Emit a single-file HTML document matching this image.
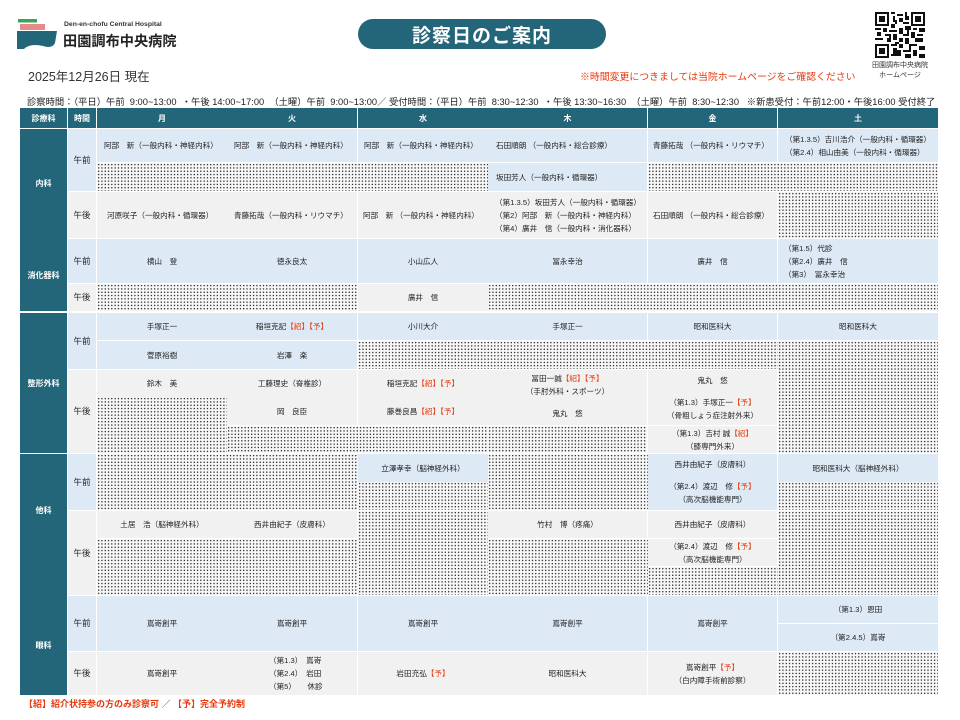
<!DOCTYPE html>
<html><head><meta charset="utf-8"><style>
*{margin:0;padding:0;box-sizing:border-box}
body{width:960px;height:720px;background:#fff;position:relative;overflow:hidden;font-family:"Liberation Sans","Noto Sans CJK JP",sans-serif;color:#222}
.c{position:absolute;display:flex;flex-direction:column;justify-content:center;align-items:center;text-align:center;font-size:7.6px;line-height:13px;white-space:nowrap}
.l{align-items:flex-start;text-align:left;padding-left:7px}
.b{background:#dde9f5}
.g{background:#f1f1f1}
.d{background-color:#f7f7f7;background-image:radial-gradient(circle,#111 0.55px,transparent 0.75px);background-size:3.3px 3.3px}
.t{background:#246679;color:#fff;font-weight:bold;font-size:8px}
.r{color:#e8380d}
.tm{font-size:8.5px}
</style></head><body>
<!-- logo -->
<svg style="position:absolute;left:16px;top:19px" width="42" height="31" viewBox="0 0 42 31">
<rect x="2" y="0" width="19" height="3.5" fill="#3aa55a"/>
<rect x="4" y="5" width="25" height="6" fill="#e48a8c"/>
<path d="M1 12 H41 L39 24 Q36 30 27 27 Q14 24 8 30 H1 Z" fill="#246679"/>
</svg>
<div style="position:absolute;left:64px;top:21px;font-size:6.8px;font-weight:bold;color:#333">Den-en-chofu Central Hospital</div>
<div style="position:absolute;left:63px;top:31px;font-size:14.2px;font-weight:bold;color:#222">田園調布中央病院</div>
<div style="position:absolute;left:358px;top:19px;width:248px;height:30px;border-radius:15px;background:#246679;color:#fff;font-size:19px;font-weight:bold;display:flex;align-items:center;justify-content:center;letter-spacing:1px">診察日のご案内</div>
<!-- QR -->
<svg style="position:absolute;left:875px;top:12px" width="50" height="46" viewBox="0 0 25 23" shape-rendering="crispEdges">
<g fill="#111">
<rect x="0" y="0" width="7" height="7"/><rect x="18" y="0" width="7" height="7"/><rect x="0" y="16" width="7" height="7"/>
</g>
<g fill="#fff"><rect x="1" y="1" width="5" height="5"/><rect x="19" y="1" width="5" height="5"/><rect x="1" y="17" width="5" height="5"/></g>
<g fill="#111"><rect x="2" y="2" width="3" height="3"/><rect x="20" y="2" width="3" height="3"/><rect x="2" y="18" width="3" height="3"/>
<rect x="8" y="0" width="2" height="1"/><rect x="11" y="1" width="3" height="1"/><rect x="9" y="2" width="1" height="3"/><rect x="12" y="3" width="2" height="2"/><rect x="15" y="0" width="1" height="4"/><rect x="14" y="5" width="3" height="1"/><rect x="8" y="6" width="2" height="2"/><rect x="10" y="4" width="1" height="2"/><rect x="16" y="2" width="1" height="2"/>
<rect x="0" y="8" width="3" height="1"/><rect x="4" y="8" width="2" height="2"/><rect x="7" y="9" width="4" height="1"/><rect x="12" y="8" width="2" height="3"/><rect x="15" y="7" width="3" height="2"/><rect x="19" y="8" width="2" height="1"/><rect x="22" y="8" width="3" height="2"/>
<rect x="1" y="10" width="2" height="2"/><rect x="5" y="11" width="3" height="1"/><rect x="9" y="11" width="2" height="3"/><rect x="14" y="11" width="3" height="1"/><rect x="18" y="10" width="2" height="3"/><rect x="21" y="11" width="3" height="1"/><rect x="7" y="12" width="1" height="1"/><rect x="16" y="9" width="1" height="2"/>
<rect x="0" y="13" width="4" height="1"/><rect x="6" y="13" width="2" height="2"/><rect x="12" y="13" width="2" height="2"/><rect x="15" y="13" width="2" height="3"/><rect x="20" y="13" width="4" height="2"/><rect x="10" y="15" width="2" height="1"/>
<rect x="8" y="16" width="3" height="1"/><rect x="12" y="16" width="2" height="2"/><rect x="17" y="16" width="4" height="1"/><rect x="22" y="17" width="3" height="2"/><rect x="9" y="18" width="2" height="3"/><rect x="14" y="19" width="4" height="1"/><rect x="19" y="19" width="2" height="3"/><rect x="8" y="21" width="5" height="1"/><rect x="15" y="21" width="3" height="2"/><rect x="22" y="21" width="3" height="2"/><rect x="11" y="19" width="2" height="2"/><rect x="17" y="17" width="1" height="2"/>
</g></svg>
<div style="position:absolute;left:862px;top:61px;width:76px;text-align:center;font-size:7px;line-height:10px;color:#333">田園調布中央病院<br>ホームページ</div>
<div style="position:absolute;left:28px;top:66px;font-size:12.5px;color:#333">2025年12月26日 現在</div>
<div style="position:absolute;left:580px;top:69px;font-size:9.9px;color:#e8380d">※時間変更につきましては当院ホームページをご確認ください</div>
<div style="position:absolute;left:27px;top:94px;font-size:9.3px;color:#222;white-space:nowrap">診察時間：（平日）午前&nbsp; 9:00~13:00&nbsp; ・午後&nbsp;14:00~17:00&nbsp; （土曜）午前&nbsp; 9:00~13:00／ 受付時間：（平日）午前&nbsp; 8:30~12:30&nbsp; ・午後&nbsp;13:30~16:30&nbsp; （土曜）午前&nbsp; 8:30~12:30&nbsp;&nbsp; ※新患受付：午前12:00・午後16:00 受付終了</div>

<!-- header -->
<div class="c t" style="left:20px;top:108px;width:47px;height:20px">診療科</div>
<div class="c t" style="left:68px;top:108px;width:28px;height:20px">時間</div>
<div class="c t" style="left:97px;top:108px;width:130px;height:20px">月</div>
<div class="c t" style="left:227px;top:108px;width:130px;height:20px">火</div>
<div class="c t" style="left:358px;top:108px;width:130px;height:20px">水</div>
<div class="c t" style="left:488px;top:108px;width:159px;height:20px">木</div>
<div class="c t" style="left:648px;top:108px;width:129px;height:20px">金</div>
<div class="c t" style="left:778px;top:108px;width:160px;height:20px">土</div>

<!-- dept -->
<div class="c t" style="left:20px;top:129px;width:47px;height:182px;justify-content:flex-start"><span style="margin-top:48px">内科</span><span style="margin-top:79px">消化器科</span></div>
<div class="c t" style="left:20px;top:313px;width:47px;height:140px">整形外科</div>
<div class="c t" style="left:20px;top:454px;width:47px;height:241px;justify-content:flex-start"><span style="margin-top:50px">他科</span><span style="margin-top:122px">眼科</span></div>

<!-- time -->
<div class="c b tm" style="left:68px;top:129px;width:28px;height:62px">午前</div>
<div class="c g tm" style="left:68px;top:192px;width:28px;height:46px">午後</div>
<div class="c b tm" style="left:68px;top:239px;width:28px;height:44px">午前</div>
<div class="c g tm" style="left:68px;top:284px;width:28px;height:27px">午後</div>
<div class="c b tm" style="left:68px;top:313px;width:28px;height:56px">午前</div>
<div class="c g tm" style="left:68px;top:370px;width:28px;height:83px">午後</div>
<div class="c b tm" style="left:68px;top:454px;width:28px;height:56px">午前</div>
<div class="c g tm" style="left:68px;top:511px;width:28px;height:84px">午後</div>
<div class="c b tm" style="left:68px;top:596px;width:28px;height:55px">午前</div>
<div class="c g tm" style="left:68px;top:652px;width:28px;height:43px">午後</div>

<!-- 内科 午前 -->
<div class="c b l" style="left:97px;top:129px;width:130px;height:33px">阿部　新（一般内科・神経内科）</div>
<div class="c b l" style="left:227px;top:129px;width:130px;height:33px">阿部　新（一般内科・神経内科）</div>
<div class="c b l" style="left:358px;top:129px;width:130px;height:33px;padding-left:6px">阿部　新（一般内科・神経内科）</div>
<div class="c b l" style="left:488px;top:129px;width:159px;height:33px;padding-left:8px">石田順朗 （一般内科・総合診療）</div>
<div class="c b l" style="left:648px;top:129px;width:129px;height:33px;padding-left:5px">青藤拓哉 （一般内科・リウマチ）</div>
<div class="c b l" style="left:778px;top:129px;width:160px;height:33px;padding-left:7px">（第1.3.5）吉川浩介（一般内科・循環器）<br>（第2.4）相山由美（一般内科・循環器）</div>
<div class="c d" style="left:97px;top:163px;width:391px;height:28px"></div>
<div class="c b l" style="left:488px;top:163px;width:159px;height:28px;padding-left:8px">坂田芳人（一般内科・循環器）</div>
<div class="c d" style="left:648px;top:163px;width:290px;height:28px"></div>
<!-- 内科 午後 -->
<div class="c g l" style="left:97px;top:192px;width:130px;height:46px;padding-left:10px">河原咲子（一般内科・循環器）</div>
<div class="c g l" style="left:227px;top:192px;width:130px;height:46px">青藤拓哉（一般内科・リウマチ）</div>
<div class="c g l" style="left:358px;top:192px;width:130px;height:46px;padding-left:5px">阿部　新 （一般内科・神経内科）</div>
<div class="c g l" style="left:488px;top:192px;width:159px;height:46px;padding-left:7px">（第1.3.5）坂田芳人（一般内科・循環器）<br>（第2）阿部　新（一般内科・神経内科）<br>（第4）廣井　信（一般内科・消化器科）</div>
<div class="c g l" style="left:648px;top:192px;width:129px;height:46px;padding-left:5px">石田順朗 （一般内科・総合診療）</div>
<div class="c d" style="left:778px;top:192px;width:160px;height:46px"></div>
<!-- 消化器 -->
<div class="c b" style="left:97px;top:239px;width:130px;height:44px">横山　登</div>
<div class="c b" style="left:227px;top:239px;width:130px;height:44px">徳永良太</div>
<div class="c b" style="left:358px;top:239px;width:130px;height:44px">小山広人</div>
<div class="c b" style="left:488px;top:239px;width:159px;height:44px">冨永幸治</div>
<div class="c b" style="left:648px;top:239px;width:129px;height:44px">廣井　信</div>
<div class="c b l" style="left:778px;top:239px;width:160px;height:44px;padding-left:6px">（第1.5）代診<br>（第2.4）廣井　信<br>（第3）　冨永幸治</div>
<div class="c d" style="left:97px;top:284px;width:260px;height:27px"></div>
<div class="c g" style="left:358px;top:284px;width:130px;height:27px">廣井　信</div>
<div class="c d" style="left:488px;top:284px;width:450px;height:27px"></div>

<!-- 整形外科 -->
<div class="c b" style="left:97px;top:313px;width:130px;height:27px">手塚正一</div>
<div class="c b" style="left:227px;top:313px;width:130px;height:27px"><span>稲垣克記<span class="r">【紹】【予】</span></span></div>
<div class="c b" style="left:358px;top:313px;width:130px;height:27px">小川大介</div>
<div class="c b" style="left:488px;top:313px;width:159px;height:27px">手塚正一</div>
<div class="c b" style="left:648px;top:313px;width:129px;height:27px">昭和医科大</div>
<div class="c b" style="left:778px;top:313px;width:160px;height:27px">昭和医科大</div>
<div class="c b" style="left:97px;top:341px;width:130px;height:28px">菅原裕樹</div>
<div class="c b" style="left:227px;top:341px;width:130px;height:28px">岩澤　楽</div>
<div class="c d" style="left:358px;top:341px;width:580px;height:28px"></div>
<div class="c g" style="left:97px;top:370px;width:130px;height:27px">鈴木　美</div>
<div class="c d" style="left:97px;top:397px;width:130px;height:56px"></div>
<div class="c g" style="left:227px;top:370px;width:130px;height:27px">工藤理史（脊椎診）</div>
<div class="c g" style="left:227px;top:397px;width:130px;height:28px">岡　良臣</div>
<div class="c d" style="left:227px;top:426px;width:261px;height:27px"></div>
<div class="c g" style="left:358px;top:370px;width:130px;height:27px"><span>稲垣克記<span class="r">【紹】【予】</span></span></div>
<div class="c g" style="left:358px;top:397px;width:130px;height:28px"><span>藤巻良昌<span class="r">【紹】【予】</span></span></div>
<div class="c g" style="left:488px;top:370px;width:159px;height:55px;justify-content:flex-start;padding-top:2px"><span>冨田一誠<span class="r">【紹】【予】</span></span><span>（手肘外科・スポーツ）</span><span style="margin-top:9px">鬼丸　悠</span></div>
<div class="c d" style="left:488px;top:426px;width:159px;height:27px"></div>
<div class="c g" style="left:648px;top:370px;width:129px;height:55px"><span>鬼丸　悠</span><span style="margin-top:9px">（第1.3）手塚正一<span class="r">【予】</span></span><span>（骨粗しょう症注射外来）</span></div>
<div class="c g" style="left:648px;top:426px;width:129px;height:27px"><span>（第1.3）吉村 誠<span class="r">【紹】</span></span><span>（膝専門外来）</span></div>
<div class="c d" style="left:778px;top:341px;width:160px;height:112px"></div>

<!-- 他科 -->
<div class="c d" style="left:97px;top:454px;width:261px;height:56px"></div>
<div class="c b" style="left:358px;top:454px;width:130px;height:28px">立澤孝幸（脳神経外科）</div>
<div class="c d" style="left:358px;top:482px;width:130px;height:28px"></div>
<div class="c d" style="left:488px;top:454px;width:160px;height:56px"></div>
<div class="c b" style="left:648px;top:454px;width:129px;height:56px"><span>西井由紀子（皮膚科）</span><span style="margin-top:9px">（第2.4）渡辺　修<span class="r">【予】</span></span><span>（高次脳機能専門）</span></div>
<div class="c b" style="left:778px;top:454px;width:160px;height:28px">昭和医科大（脳神経外科）</div>
<div class="c d" style="left:778px;top:482px;width:160px;height:28px"></div>
<div class="c g" style="left:97px;top:511px;width:130px;height:27px">土居　浩（脳神経外科）</div>
<div class="c g" style="left:227px;top:511px;width:130px;height:27px">西井由紀子（皮膚科）</div>
<div class="c d" style="left:97px;top:539px;width:261px;height:56px"></div>
<div class="c d" style="left:358px;top:511px;width:130px;height:84px"></div>
<div class="c g" style="left:488px;top:511px;width:159px;height:27px">竹村　博（疼痛）</div>
<div class="c d" style="left:488px;top:539px;width:160px;height:56px"></div>
<div class="c g" style="left:648px;top:511px;width:129px;height:27px">西井由紀子（皮膚科）</div>
<div class="c g" style="left:648px;top:539px;width:129px;height:27px"><span>（第2.4）渡辺　修<span class="r">【予】</span></span><span>（高次脳機能専門）</span></div>
<div class="c d" style="left:648px;top:567px;width:130px;height:28px"></div>
<div class="c d" style="left:778px;top:511px;width:160px;height:84px"></div>

<!-- 眼科 -->
<div class="c b" style="left:97px;top:596px;width:130px;height:55px">嶌嵜創平</div>
<div class="c b" style="left:227px;top:596px;width:130px;height:55px">嶌嵜創平</div>
<div class="c b" style="left:358px;top:596px;width:130px;height:55px">嶌嵜創平</div>
<div class="c b" style="left:488px;top:596px;width:159px;height:55px">嶌嵜創平</div>
<div class="c b" style="left:648px;top:596px;width:129px;height:55px">嶌嵜創平</div>
<div class="c b" style="left:778px;top:596px;width:160px;height:27px">（第1.3）恩田</div>
<div class="c b" style="left:778px;top:624px;width:160px;height:27px">（第2.4.5）嶌嵜</div>
<div class="c g" style="left:97px;top:652px;width:130px;height:43px">嶌嵜創平</div>
<div class="c g l" style="left:227px;top:652px;width:130px;height:43px;padding-left:42px">（第1.3）　嶌嵜<br>（第2.4）　岩田<br>（第5）　　休診</div>
<div class="c g" style="left:358px;top:652px;width:130px;height:43px"><span>岩田充弘<span class="r">【予】</span></span></div>
<div class="c g" style="left:488px;top:652px;width:159px;height:43px">昭和医科大</div>
<div class="c g" style="left:648px;top:652px;width:129px;height:43px"><span>嶌嵜創平<span class="r">【予】</span></span><span>（白内障手術前診察）</span></div>
<div class="c d" style="left:778px;top:652px;width:160px;height:43px"></div>

<div style="position:absolute;left:24px;top:697px;font-size:9px;font-weight:bold;color:#e8380d;white-space:nowrap">【紹】紹介状持参の方のみ診察可 ／ 【予】完全予約制</div>
</body></html>
